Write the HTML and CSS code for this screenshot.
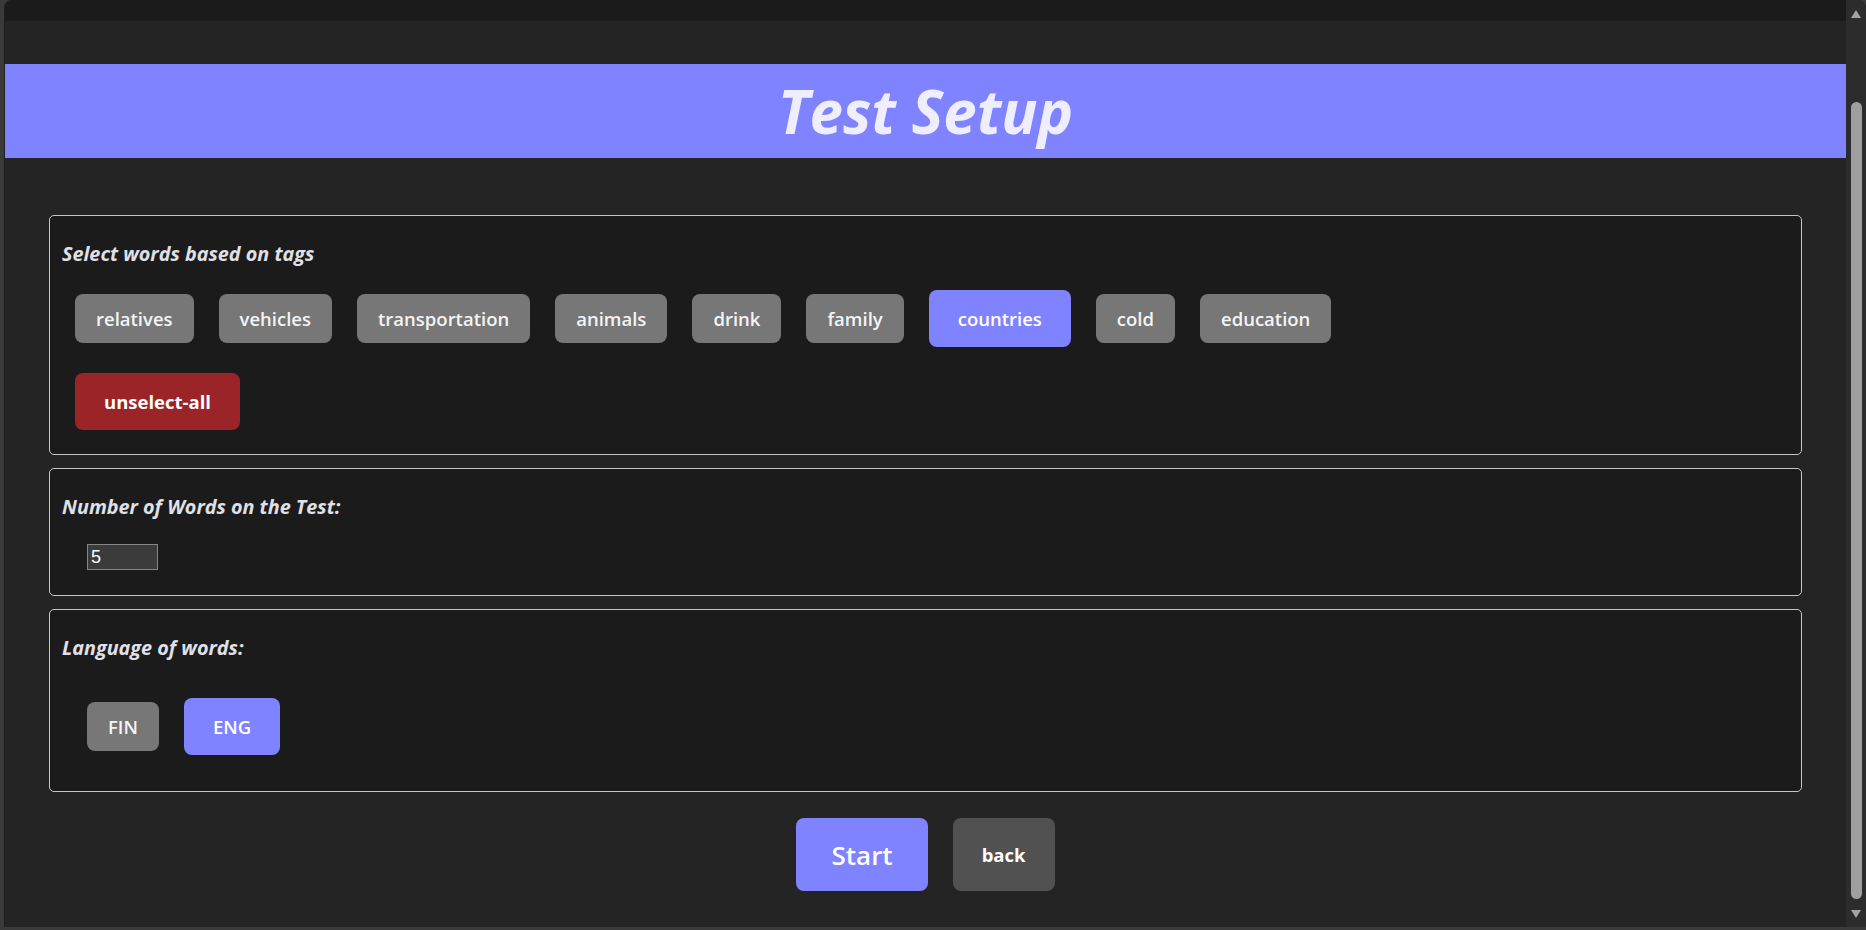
FILE: index.html
```html
<!DOCTYPE html>
<html lang="en">
<head>
<meta charset="utf-8">
<title>Test Setup</title>
<link rel="stylesheet" href="styles.css">
</head>
<body>
<div class="window">
  <div class="main">
    <div class="topbar"></div>
    <header class="banner"><h1 class="banner-title">Test Setup</h1></header>
    <div class="content">
      <section class="panel">
        <h2 class="panel-title">Select words based on tags</h2>
        <div class="tag-rows">
          <div class="tag-row">
            <button class="btn">relatives</button>
            <button class="btn">vehicles</button>
            <button class="btn">transportation</button>
            <button class="btn">animals</button>
            <button class="btn">drink</button>
            <button class="btn">family</button>
            <button class="btn selected">countries</button>
            <button class="btn">cold</button>
            <button class="btn">education</button>
          </div>
          <div class="tag-row">
            <button class="btn danger">unselect-all</button>
          </div>
        </div>
      </section>
      <section class="panel">
        <h2 class="panel-title">Number of Words on the Test:</h2>
        <div class="count-row">
          <input class="count-input" type="text" value="5">
        </div>
      </section>
      <section class="panel">
        <h2 class="panel-title">Language of words:</h2>
        <div class="lang-row">
          <button class="btn">FIN</button>
          <button class="btn selected">ENG</button>
        </div>
      </section>
      <div class="actions">
        <button class="action start">Start</button>
        <button class="action back">back</button>
      </div>
    </div>
  </div>
  <div class="scrollbar">
    <div class="arrow up"></div>
    <div class="track"><div class="thumb"></div></div>
    <div class="arrow down"></div>
  </div>
</div>
</body>
</html>
```

FILE: styles.css
```css
* { box-sizing: border-box; }

html, body {
  margin: 0;
  height: 930px;
  overflow: hidden;
  background: #3a3a3a;
  font-family: "Open Sans", "Noto Sans", sans-serif;
}

.window {
  margin-left: 4px;
  height: 927px;
  display: flex;
  border-left: 1px solid #1e1e1e;
  border-radius: 8px 8px 0 0;
  overflow: hidden;
  background: #242424;
}

.main {
  flex: 1;
  display: flex;
  flex-direction: column;
  background: #242424;
  min-width: 0;
}

.topbar {
  height: 21px;
  background: #1b1b1b;
  flex: none;
}

.banner {
  margin-top: 43px;
  height: 94px;
  background: #8083ff;
  display: flex;
  align-items: center;
  justify-content: center;
}

.banner-title {
  margin: 0;
  font-size: 60px;
  line-height: 1;
  font-weight: 700;
  font-style: italic;
  color: #eeeeff;
}

.content {
  padding: 57px 44px 0;
  display: flex;
  flex-direction: column;
  gap: 13px;
}

.panel {
  background: #1b1b1b;
  border: 1px solid #c6c6c6;
  border-radius: 5px;
  padding: 24px 12px;
  display: flex;
  flex-direction: column;
  gap: 23px;
}

.panel-title {
  margin: 0;
  font-size: 19.8px;
  line-height: 27px;
  font-weight: 700;
  font-style: italic;
  color: #e0e0e8;
}

.tag-rows {
  display: flex;
  flex-direction: column;
  gap: 26px;
  padding-left: 13px;
}

.tag-row {
  display: flex;
  align-items: center;
  gap: 25px;
  min-height: 57px;
}

.btn {
  font-family: inherit;
  font-size: 18.5px;
  line-height: 27px;
  font-weight: 600;
  color: #f4f4f4;
  background: #777777;
  border: none;
  border-radius: 8px;
  padding: 11px 21px;
}

.btn.selected {
  background: #8083ff;
  color: #ffffff;
  padding: 15px 29px;
}

.btn.danger {
  background: #9a2428;
  color: #ffffff;
  font-weight: 700;
  padding: 15px 29px;
}

.count-row {
  padding-left: 25px;
}

.count-input {
  width: 71px;
  height: 26px;
  margin: 1px 0;
  padding: 1px 3px;
  background: #3b3b3b;
  border: 1px solid #858585;
  color: #ffffff;
  font-family: "Liberation Sans", Arial, sans-serif;
  font-size: 18px;
}

.lang-row {
  display: flex;
  align-items: center;
  gap: 25px;
  padding: 14px 0 12px 25px;
}

.actions {
  margin-top: 13px;
  display: flex;
  justify-content: center;
  gap: 25px;
}

.action {
  font-family: inherit;
  color: #ffffff;
  border: none;
  border-radius: 8px;
  height: 73px;
}

.action.start {
  background: #8083ff;
  font-size: 26px;
  font-weight: 600;
  padding: 0 35px;
}

.action.back {
  background: #515151;
  font-size: 18.5px;
  font-weight: 700;
  padding: 0 29px;
}

.scrollbar {
  width: 20px;
  flex: none;
  background: #2c2c2c;
  display: flex;
  flex-direction: column;
  align-items: center;
  border-radius: 0 8px 0 0;
}

.arrow {
  width: 0;
  height: 0;
  border-left: 5px solid transparent;
  border-right: 5px solid transparent;
}

.arrow.up {
  margin-top: 10px;
  border-bottom: 8px solid #a3a3a3;
}

.arrow.down {
  margin-bottom: 9px;
  border-top: 8px solid #a3a3a3;
}

.track {
  flex: 1;
  width: 100%;
  display: flex;
  justify-content: center;
  padding: 84px 0 11px;
}

.thumb {
  width: 11px;
  height: 100%;
  background: #9f9f9f;
  border-radius: 6px;
}
```
